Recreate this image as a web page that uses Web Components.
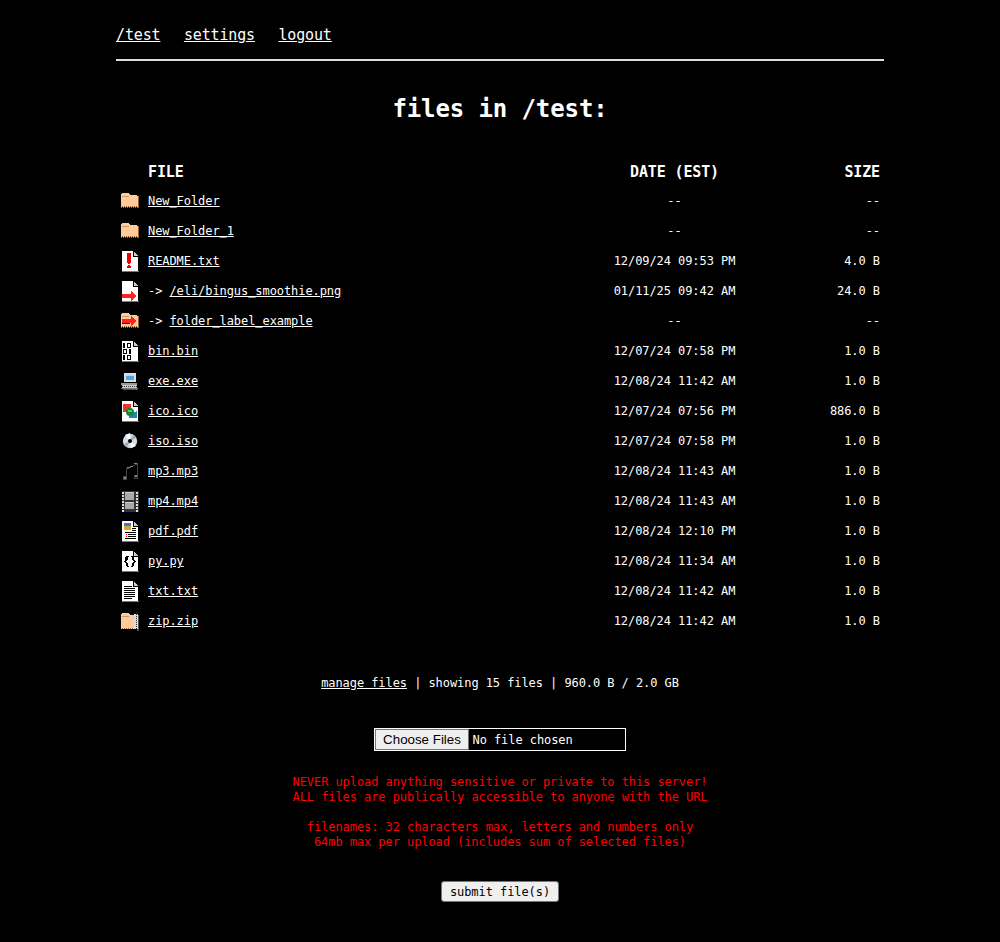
<!DOCTYPE html>
<html>
<head>
<meta charset="utf-8">
<title>files in /test</title>
<style>
  html, body { margin: 0; background: #000; }
  body { color: #fff; font-family: "DejaVu Sans Mono", "Liberation Mono", monospace; font-size: 12px; letter-spacing: -.07px; }
</style>
</head>
<body>
<file-app>
  <site-nav slot="nav">
    <a href="#">/test</a>
    <a href="#">settings</a>
    <a href="#">logout</a>
  </site-nav>
  <h1 slot="title">files in /test:</h1>
  <file-table>
    <file-row icon="folder" date="--" size="--"><a href="#">New_Folder</a></file-row>
    <file-row icon="folder" date="--" size="--"><a href="#">New_Folder_1</a></file-row>
    <file-row icon="readme" date="12/09/24 09:53 PM" size="4.0 B"><a href="#">README.txt</a></file-row>
    <file-row icon="link" date="01/11/25 09:42 AM" size="24.0 B">-&gt; <a href="#">/eli/bingus_smoothie.png</a></file-row>
    <file-row icon="folderlink" date="--" size="--">-&gt; <a href="#">folder_label_example</a></file-row>
    <file-row icon="bin" date="12/07/24 07:58 PM" size="1.0 B"><a href="#">bin.bin</a></file-row>
    <file-row icon="exe" date="12/08/24 11:42 AM" size="1.0 B"><a href="#">exe.exe</a></file-row>
    <file-row icon="ico" date="12/07/24 07:56 PM" size="886.0 B"><a href="#">ico.ico</a></file-row>
    <file-row icon="iso" date="12/07/24 07:58 PM" size="1.0 B"><a href="#">iso.iso</a></file-row>
    <file-row icon="mp3" date="12/08/24 11:43 AM" size="1.0 B"><a href="#">mp3.mp3</a></file-row>
    <file-row icon="mp4" date="12/08/24 11:43 AM" size="1.0 B"><a href="#">mp4.mp4</a></file-row>
    <file-row icon="pdf" date="12/08/24 12:10 PM" size="1.0 B"><a href="#">pdf.pdf</a></file-row>
    <file-row icon="py" date="12/08/24 11:34 AM" size="1.0 B"><a href="#">py.py</a></file-row>
    <file-row icon="txt" date="12/08/24 11:42 AM" size="1.0 B"><a href="#">txt.txt</a></file-row>
    <file-row icon="zip" date="12/08/24 11:42 AM" size="1.0 B"><a href="#">zip.zip</a></file-row>
  </file-table>
  <file-stats><a href="#">manage files</a> | showing 15 files | 960.0 B / 2.0 GB</file-stats>
  <upload-form></upload-form>
</file-app>

<script>
// page outline shared by the document icons
const page = `<path fill="#fff" d="M2 1h11v1h1v1h1v1h1v1h1v1h1v15H2z"/>
  <path fill="#000" d="M13 1h1v5h5v1h-6z"/><path fill="#ccc" d="M14 2h1v1h1v1h1v1h1v1h-4z"/>
  <path fill="#777" d="M2 21h17v1H2z"/>`

const folderBody = `<g transform="translate(-1 0)"><path fill="#fc9" d="M3 3h7v1h1v1h7v1h1v11H2V4h1z"/>
  <path fill="#c96" d="M3 6h7v1H3z"/><path fill="#963" d="M19 6h1v12h-1z"/>
  <path stroke="#963" stroke-dasharray="1 1" d="M3 16.5h16M2 17.5h18"/></g>`

const icons = {
  folder: folderBody,
  readme: page + `<path fill="#e00" d="M7 3h4v10h-1v1H8v-1H7z"/><path fill="#e00" d="M8 15h2v1h1v2H7v-2h1z"/>`,
  link: page + `<path fill="#f22" d="M2 14h9v-3h1v1h1v1h1v1h1v1h1v2h-1v1h-1v1h-1v1h-1v1h-1v-3H2z"/>`,
  folderlink: folderBody + `<path fill="#f22" d="M2 9h9V6h1v1h1v1h1v1h1v1h1v2h-1v1h-1v1h-1v1h-1v1h-1v-3H2z"/><path fill="#600" d="M2 13h8v1H2z"/>`,
  bin: page + `<path fill="#000" fill-rule="evenodd" d="M3 3h2v5H3zM7 3h4v5H7zM8 4v3h2V4zM3 9h4v5H3zM4 10v3h2v-3zM9 9h2v5H9zM3 15h2v5H3zM7 15h4v5H7zM8 16v3h2v-3z"/>`,
  exe: `<path fill="#ddd" d="M4 3h12v9H4z"/><path fill="#4ae" d="M6 5h8v5H6z"/><path fill="#9df" d="M6 5h8v1H6z"/>
    <path fill="#999" d="M1 13h16v2H1z"/><path fill="#ccc" d="M2 15h15v3H2z"/><path stroke="#333" stroke-dasharray="1 1" d="M2 16.5h15"/>
    <path fill="#777" d="M1 18h17v1H1z"/><path fill="#555" d="M3 19h15v1H3z"/>`,
  ico: page + `<path fill="#e33" d="M3 4h8v8H3z"/><path fill="#28a" d="M17 11v7H9v-3z"/><circle cx="10" cy="12" r="4" fill="#183" shape-rendering="auto"/><path fill="#4c6" d="M8 10h4v2H8z"/>`,
  iso: `<g shape-rendering="auto"><circle cx="10" cy="11" r="7.2" fill="#d8dde4"/><path fill="#fff" d="M10 11 5 5l5-2zM10 11l6 5-5 2z"/><path fill="#9ab" d="M4 14l6-3-3 6zM16 8l-6 3 3-6z"/><circle cx="10" cy="11" r="2" fill="#000"/></g>`,
  mp3: `<path fill="none" stroke="#444" d="M6.5 16V9l11-5v11M3.5 19.500h3v-3h-3zM14.500 18.500h3v-3h-3z"/><path fill="#888" d="M7 7h3v1H7zM10 6h3v1h-3zM14 3h3v1h-3zM15 15h2v2h-2zM4 17h2v2H4z"/>`,
  mp4: `<path fill="#333" d="M2 1h17v21H2z"/><path fill="#aaa" d="M5 2h9v8H5zM5 12h9v7H5z"/><path fill="#ccc" d="M5 2h9v1H5zM5 12h9v1H5z"/>
    <path stroke="#ddd" stroke-width="2" stroke-dasharray="2 1" d="M3 2v20M16.500 2v20"/>`,
  pdf: page + `<path fill="#e8a030" d="M4 3h7v7H4z"/><path fill="#28c" d="M4 3h7v3H4z"/><path fill="#000" d="M12 8h4v1h-4zM12 10h4v1h-4zM5 12h11v1H5zM8 14h8v1H8zM8 16h8v1H8zM5 18h11v1H5z"/><path fill="#e00" d="M6 14h1v1H6zM6 16h1v1H6z"/>`,
  py: page + `<path fill="#000" d="M7 6h2v1H8v3H7v1H6v1h1v1h1v3h1v1H7v-1H6v-3H5v-1H4v-1h1V7h1V6zM11 6h2v1h1v3h1v1h1v1h-1v1h-1v3h-1v1h-2v-1h1v-3h1v-1h1v-1h-1v-1h-1V7h-1z"/>`,
  txt: page + `<path fill="#000" d="M4 6h8v1H4zM4 8h11v1H4zM4 10h11v1H4zM4 12h11v1H4zM4 14h11v1H4zM4 16h11v1H4zM4 18h8v1H4z"/>`,
  zip: `<g transform="translate(-1 0)"><path fill="#fc9" d="M3 3h7v1h1v1h4v14H2V4h1z"/><path fill="#c96" d="M3 6h7v1H3z"/>
    <path stroke="#963" stroke-dasharray="1 1" d="M3 18.500h12"/>
    <path fill="#ddd" d="M15 4h4v15h-4z"/><path stroke="#333" stroke-dasharray="1 1" d="M17 2v18"/><path fill="#555" d="M19 5h1v14h-1zM18 19h2v2h-2z"/></g>`
}

const rowColumns = '32px 441px 171px 1fr'

class FileApp extends HTMLElement {
  constructor() {
    super()
    this.attachShadow({ mode: 'open' }).innerHTML = `
      <style>
        :host { display: block; width: 768px; margin: 0 auto; padding-bottom: 40px; }
        ::slotted(h1) {
          margin: 0; height: 95px; display: flex; align-items: center; justify-content: center;
          font-size: 24px; font-weight: bold; letter-spacing: -.1px;
        }
      </style>
      <slot name="nav"></slot>
      <slot name="title"></slot>
      <slot></slot>`
  }
}

class SiteNav extends HTMLElement {
  constructor() {
    super()
    this.attachShadow({ mode: 'open' }).innerHTML = `
      <style>
        :host {
          display: flex; gap: 23.5px; align-items: center; box-sizing: border-box; height: 61px;
          padding: 15px 0 5px; border-bottom: 2px solid #ddd;
          font-size: 15px; letter-spacing: -.15px;
        }
        ::slotted(a) { color: #fff; }
      </style>
      <slot></slot>`
  }
}

class FileTable extends HTMLElement {
  constructor() {
    super()
    this.attachShadow({ mode: 'open' }).innerHTML = `
      <style>
        :host { display: block; padding-bottom: 30px; }
        #head {
          display: grid; grid-template-columns: ${rowColumns}; align-items: center;
          height: 30px; box-sizing: border-box; padding-top: 1px;
          font-size: 15px; font-weight: bold; letter-spacing: -.15px;
        }
        #date { text-align: center; }
        #size { text-align: right; padding-right: 4px; }
      </style>
      <div id="head"><div></div><div>FILE</div><div id="date">DATE (EST)</div><div id="size">SIZE</div></div>
      <slot></slot>`
  }
}

class FileRow extends HTMLElement {
  constructor() {
    super()
    const icon = this.getAttribute('icon')
    this.attachShadow({ mode: 'open' }).innerHTML = `
      <style>
        :host { display: grid; grid-template-columns: ${rowColumns}; align-items: center; height: 30px; }
        svg { display: block; margin-left: 4px; }
        #date { text-align: center; }
        #size { text-align: right; padding-right: 4px; }
        ::slotted(a) { color: #fff; }
      </style>
      <svg width="20" height="22" viewBox="0 0 20 22" shape-rendering="crispEdges">${icons[icon]}</svg>
      <div><slot></slot></div>
      <div id="date">${this.getAttribute('date')}</div>
      <div id="size">${this.getAttribute('size')}</div>`
  }
}

class FileStats extends HTMLElement {
  constructor() {
    super()
    this.attachShadow({ mode: 'open' }).innerHTML = `
      <style>
        :host { display: block; text-align: center; line-height: 15px; padding-top: 10px; }
        ::slotted(a) { color: #fff; }
      </style>
      <slot></slot>`
  }
}

class UploadForm extends HTMLElement {
  constructor() {
    super()
    this.attachShadow({ mode: 'open' }).innerHTML = `
      <style>
        :host { display: flex; flex-direction: column; align-items: center; padding-top: 37px; }
        #picker {
          display: flex; align-items: center; gap: 3.5px; width: 252px; height: 23px; box-sizing: border-box;
          border: 1px solid #fff;
        }
        button { font-family: inherit; letter-spacing: inherit; color: #000; background: #efefef; cursor: pointer; }
        #picker button {
          width: 94px; height: 21px; padding: 0; border: 1px solid #767676; border-radius: 0;
          font: 13.33px "Liberation Sans", Arial, sans-serif; letter-spacing: 0;
        }
        p { margin: 0; color: #f00; text-align: center; line-height: 15px; }
        #warn { margin-top: 24px; }
        #rules { margin-top: 15px; }
        #submit {
          margin-top: 31px; width: 118px; height: 21px; padding: 0; box-sizing: border-box;
          border: 1px solid #767676; border-radius: 3px; font-size: 12px;
        }
      </style>
      <div id="picker"><button type="button">Choose Files</button><span>No file chosen</span></div>
      <p id="warn">NEVER upload anything sensitive or private to this server!<br>ALL files are publically accessible to anyone with the URL</p>
      <p id="rules">filenames: 32 characters max, letters and numbers only<br>64mb max per upload (includes sum of selected files)</p>
      <button id="submit" type="button">submit file(s)</button>`
  }
}

customElements.define('file-app', FileApp)
customElements.define('site-nav', SiteNav)
customElements.define('file-table', FileTable)
customElements.define('file-row', FileRow)
customElements.define('file-stats', FileStats)
customElements.define('upload-form', UploadForm)
</script>
</body>
</html>
